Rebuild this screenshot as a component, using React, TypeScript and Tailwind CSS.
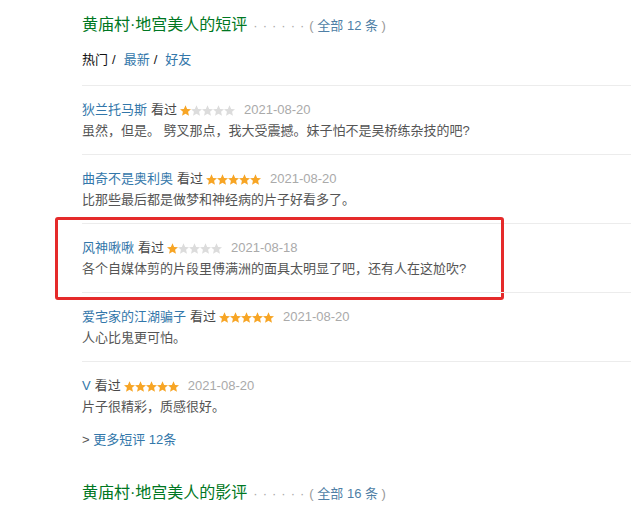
const comments = [
  { user: '狄兰托马斯', rating: 1, date: '2021-08-20', text: '虽然，但是。 劈叉那点，我大受震撼。妹子怕不是吴桥练杂技的吧?' },
  { user: '曲奇不是奥利奥', rating: 5, date: '2021-08-20', text: '比那些最后都是做梦和神经病的片子好看多了。' },
  { user: '风神啾啾', rating: 1, date: '2021-08-18', text: '各个自媒体剪的片段里傅满洲的面具太明显了吧，还有人在这尬吹?', marked: true },
  { user: '爱宅家的江湖骗子', rating: 5, date: '2021-08-20', text: '人心比鬼更可怕。' },
  { user: 'V', rating: 5, date: '2021-08-20', text: '片子很精彩，质感很好。' },
]

function Stars({ rating }: { rating: number }) {
  return (
    <span className="mx-[3px] inline-flex items-center">
      {[0, 1, 2, 3, 4].map((i) => (
        <svg key={i} viewBox="1.5 1.5 21 20" className="h-[11px] w-[11px]">
          <path
            d="M12 1.5l3.1 6.9 7.4.7-5.6 5 1.7 7.4L12 17.6l-6.6 3.9 1.7-7.4-5.6-5 7.4-.7z"
            fill={i < rating ? '#f7a525' : '#dcdcdc'}
          />
        </svg>
      ))}
    </span>
  )
}

function SectionTitle({ title, total }: { title: string; total: number }) {
  return (
    <h2 className="flex items-baseline text-[16px] leading-[24px] text-[#072]">
      <span>{title}</span>
      <span className="ml-[6px] text-[13px] tracking-[5px] text-[#aaa]">······</span>
      <span className="text-[13px] text-[#999]">
        ( <span className="text-[#4f7fa6]">全部 {total} 条</span> )
      </span>
    </h2>
  )
}

export default function App() {
  return (
    <div className="min-h-[518px] bg-white pl-[82px] pt-[13px] font-['Liberation_Sans','Noto_Sans_CJK_SC',sans-serif] text-[13px]">
      <SectionTitle title="黄庙村·地宫美人的短评" total={12} />

      <div className="mb-[15px] mt-[12px] flex items-center leading-[20px]">
        <span className="text-[#111]">热门</span>
        <span className="mx-[4px] text-[#111]">/</span>
        <span className="ml-[4px] text-[#37a]">最新</span>
        <span className="mx-[4px] text-[#111]">/</span>
        <span className="ml-[4px] text-[#37a]">好友</span>
      </div>

      <div>
        {comments.map((c) => (
          <div key={c.user} className="relative border-t border-[#ececec] pb-[13px] pt-[14px]">
            {c.marked ? (
              <div className="pointer-events-none absolute -top-[7px] left-[-27px] h-[83px] w-[449px] rounded-[3px] border-[3px] border-[#e52a2a]" />
            ) : null}
            <div className="flex items-center leading-[20px]">
              <span className="text-[#37a]">{c.user}</span>
              <span className="ml-[4px] text-[#494949]">看过</span>
              <Stars rating={c.rating} />
              <span className="ml-[6px] text-[#aaa]">{c.date}</span>
            </div>
            <p className="leading-[21px] text-[#555]">{c.text}</p>
          </div>
        ))}
      </div>

      <div className="leading-[20px] text-[#37a]">
        <span className="text-[#555]">&gt;</span> 更多短评 12条
      </div>

      <div className="mt-[31px]">
        <SectionTitle title="黄庙村·地宫美人的影评" total={16} />
      </div>
    </div>
  )
}
